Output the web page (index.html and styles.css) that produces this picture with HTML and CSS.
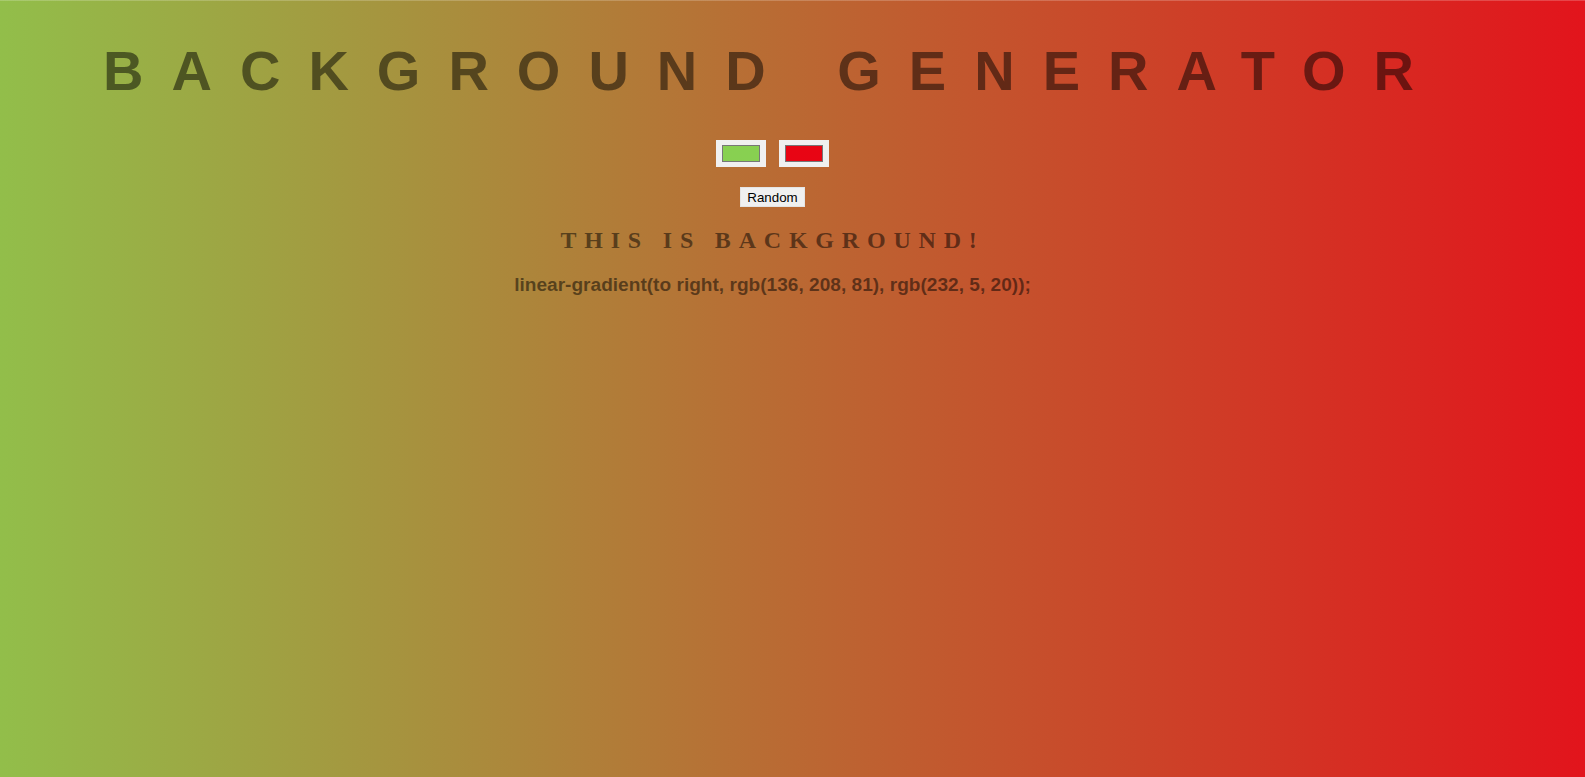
FILE: index.html
```html
<!DOCTYPE html>
<html lang="en">
<head>
<meta charset="utf-8">
<title>Background Generator</title>
<link rel="stylesheet" href="styles.css">
</head>
<body class="page">
  <main class="app">
    <h1 class="title">Background Generator</h1>
    <div class="pickers">
      <input class="picker" type="color" name="color1" value="#88d051">
      <input class="picker" type="color" name="color2" value="#e80514">
    </div>
    <div class="actions">
      <button class="random-btn" type="button">Random</button>
    </div>
    <h2 class="subtitle">This is background!</h2>
    <h3 class="css-output">linear-gradient(to right, rgb(136, 208, 81), rgb(232, 5, 20));</h3>
  </main>
</body>
</html>
```
FILE: styles.css
```css
html {
  min-height: 100%;
  border-top: 1px solid rgba(255, 255, 255, 0.2);
}

.page {
  margin: 0 8px;
  min-height: 100vh;
  background: linear-gradient(to right, rgb(146, 190, 74), rgb(226, 20, 28));
  color: rgba(0, 0, 0, 0.5);
  text-align: center;
}

.app {
  display: flex;
  flex-direction: column;
  align-items: center;
  padding-top: 1px;
  padding-right: 40px;
}

.title {
  margin: 37px 0 37px;
  font: 700 56px/64px "Liberation Sans", Arial, sans-serif;
  letter-spacing: 28px;
  text-transform: uppercase;
}

.pickers {
  display: flex;
  gap: 13px;
}

.picker {
  width: 50px;
  height: 27px;
  padding: 4px 5px;
  border: 1px solid #f0f0f0;
  background: #f0f0f0;
  box-sizing: border-box;
  cursor: pointer;
}

.picker::-webkit-color-swatch-wrapper {
  padding: 0;
}

.picker::-webkit-color-swatch {
  border: 1px solid #777;
}

.actions {
  margin-top: 20px;
}

.random-btn {
  height: 20px;
  padding: 0 6px;
  font: 400 13.33px "Liberation Sans", Arial, sans-serif;
  color: #000;
  background: #f0f0f0;
  border: 1px solid #e4e4e4;
  border-radius: 0;
}

.subtitle {
  margin: 19px 0 0;
  font: 700 24px/28px "Liberation Serif", "Times New Roman", serif;
  letter-spacing: 7.8px;
  text-transform: uppercase;
}

.css-output {
  margin: 20px 0 0;
  font: 700 19.1px/22px "Liberation Sans", Arial, sans-serif;
}
```
